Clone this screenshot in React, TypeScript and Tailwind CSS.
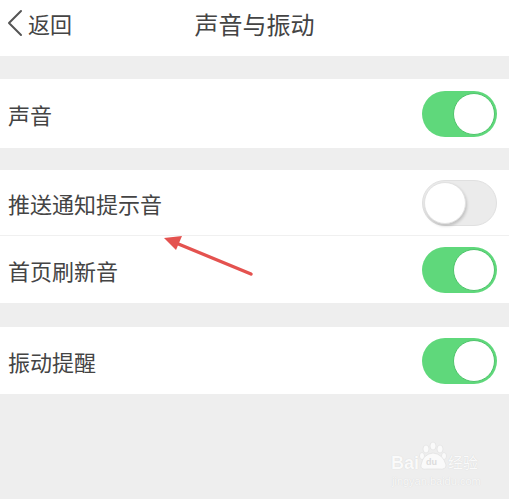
import React from "react";

const font = { fontFamily: '"Noto Sans CJK SC", "Noto Sans", sans-serif' };
const latin = { fontFamily: '"Liberation Sans", Arial, sans-serif' };

function Toggle({ on }: { on: boolean }) {
  if (on) {
    return (
      <div className="flex h-[46px] w-[75px] items-center justify-end rounded-full bg-[#5fd87b] p-[2px]">
        <div className="h-[42px] w-[42px] rounded-full border border-[#4fc46b] bg-white" />
      </div>
    );
  }
  return (
    <div className="flex h-[46px] w-[75px] items-center justify-start rounded-full border border-[#e0e0e0] bg-[#ebebeb] p-[1px]">
      <div className="h-[42px] w-[42px] rounded-full border border-[#e2e2e2] bg-white shadow-[1px_2px_3px_rgba(0,0,0,0.18)]" />
    </div>
  );
}

function Row({ label, on, h }: { label: string; on: boolean; h: string }) {
  return (
    <div className={`flex ${h} items-center justify-between bg-white pl-[8px] pr-[12px]`}>
      <span className="text-[22px] leading-none text-[#444]" style={font}>
        {label}
      </span>
      <Toggle on={on} />
    </div>
  );
}

export default function App() {
  return (
    <div className="relative flex h-[499px] w-[509px] flex-col overflow-hidden bg-[#eeeeee]" style={font}>
      <div className="relative flex h-[56px] items-center justify-center bg-white pb-[8px]">
        <div className="absolute left-[6px] top-[9px] flex items-center">
          <svg width="18" height="28" viewBox="0 0 18 28" className="mr-[4px]">
            <path d="M15 2 L3 14 L15 26" fill="none" stroke="#555" strokeWidth="2" strokeLinecap="round" strokeLinejoin="round" />
          </svg>
          <span className="text-[22px] leading-none text-[#444]">返回</span>
        </div>
        <span className="text-[24px] leading-none text-[#444]">声音与振动</span>
      </div>
      <div className="h-[23px]" />
      <Row label="声音" on={true} h="h-[69px]" />
      <div className="h-[22px]" />
      <div className="border-b border-[#f0f0f0]">
        <Row label="推送通知提示音" on={false} h="h-[65px]" />
      </div>
      <Row label="首页刷新音" on={true} h="h-[67px]" />
      <div className="h-[24px]" />
      <Row label="振动提醒" on={true} h="h-[67px]" />

      <svg className="absolute left-0 top-0" width="509" height="499" viewBox="0 0 509 499">
        <line x1="251" y1="274" x2="176" y2="243" stroke="#e4524f" strokeWidth="3.5" strokeLinecap="round" />
        <polygon points="164,238 182,236 176,250" fill="#e4524f" />
        <g fill="#fafafa" stroke="#dedede" strokeWidth="0.6">
          <ellipse cx="426" cy="449" rx="3" ry="4" />
          <ellipse cx="433" cy="446" rx="3" ry="4" />
          <ellipse cx="440" cy="449" rx="3" ry="4" />
          <ellipse cx="444" cy="456" rx="2.5" ry="3.5" />
          <ellipse cx="422" cy="456" rx="2.5" ry="3.5" />
          <path d="M421 465 Q423 454 433 453 Q443 454 446 465 Q446 470 439 469 L427 469 Q420 470 421 465 Z" />
        </g>
      </svg>

      <span className="absolute left-[391px] top-[454px] text-[18px] font-bold leading-none text-[#fafafa] [text-shadow:0_0_1px_#d0d0d0]" style={latin}>
        Bai
      </span>
      <span className="absolute left-[426px] top-[458px] text-[9px] font-bold leading-none text-[#dcdcdc]" style={latin}>
        du
      </span>
      <span className="absolute left-[448px] top-[454px] text-[15px] leading-[16px] text-[#fafafa] [text-shadow:0_0_1px_#d0d0d0]">
        经验
      </span>
      <span className="absolute left-[392px] top-[476px] text-[11px] leading-none text-[#f8f8f8] [text-shadow:0_0_1px_#d0d0d0]" style={latin}>
        jingyan.baidu.com
      </span>
    </div>
  );
}
